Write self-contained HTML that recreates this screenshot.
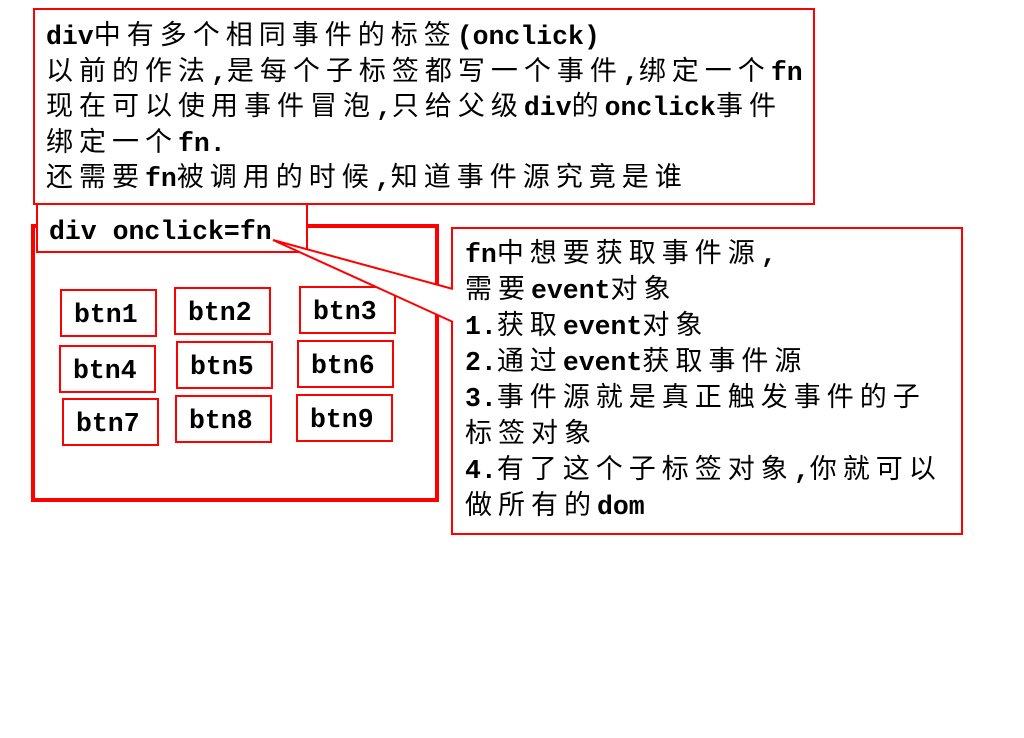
<!DOCTYPE html>
<html><head><meta charset="utf-8"><style>
body{margin:0;width:1024px;height:738px;background:#fff;position:relative;overflow:hidden;font-family:"Liberation Mono","Noto Sans CJK SC",monospace;font-size:26.5px;color:#000}
.b{position:absolute;box-sizing:border-box;border:2px solid #f00;background:#fff}
.t{position:absolute;white-space:nowrap;font-weight:bold}
.t div{height:35.5px;line-height:35.5px}
.r div{height:36px;line-height:36px}
i{font-style:normal;font-weight:normal;letter-spacing:6px;font-size:27px;line-height:1;font-family:"Noto Sans CJK SC",sans-serif}
.btn{position:absolute;box-sizing:border-box;border:2px solid #f00;width:97px;height:48px;font-weight:bold;line-height:48px;padding-left:12px}
</style></head><body>
<div class="b" style="left:31px;top:224px;width:408px;height:278px;border-width:4px"></div>
<div class="b" style="left:33px;top:8px;width:782px;height:197px"></div>
<div class="t" style="left:46px;top:19px">
<div>div<i>中有多个相同事件的标签</i>(onclick)</div>
<div><i>以前的作法</i>,<i>是每个子标签都写一个事件</i>,<i>绑定一个</i>fn</div>
<div><i>现在可以使用事件冒泡</i>,<i>只给父级</i>div<i>的</i>onclick<i>事件</i></div>
<div><i>绑定一个</i>fn.</div>
<div><i>还需要</i>fn<i>被调用的时候</i>,<i>知道事件源究竟是谁</i></div>
</div>
<div class="b" style="left:36px;top:203px;width:272px;height:50px"></div>
<div class="t" style="left:49px;top:214px;line-height:36px">div onclick=fn</div>
<div class="btn" style="left:60px;top:289px">btn1</div>
<div class="btn" style="left:174px;top:287px">btn2</div>
<div class="btn" style="left:299px;top:286px">btn3</div>
<div class="btn" style="left:59px;top:345px">btn4</div>
<div class="btn" style="left:176px;top:341px">btn5</div>
<div class="btn" style="left:297px;top:340px">btn6</div>
<div class="btn" style="left:62px;top:398px">btn7</div>
<div class="btn" style="left:175px;top:395px">btn8</div>
<div class="btn" style="left:296px;top:394px">btn9</div>
<div class="b" style="left:451px;top:227px;width:512px;height:308px"></div>
<svg style="position:absolute;left:0;top:0" width="1024" height="738">
<polygon points="273,240 453,289 453,322" fill="#fff" stroke="none"/>
<polyline points="453,289 273,240 453,322" fill="none" stroke="#f00" stroke-width="2"/>
</svg>
<div class="t r" style="left:465px;top:237px">
<div>fn<i>中想要获取事件源</i>,</div>
<div><i>需要</i>event<i>对象</i></div>
<div>1.<i>获取</i>event<i>对象</i></div>
<div>2.<i>通过</i>event<i>获取事件源</i></div>
<div>3.<i>事件源就是真正触发事件的子</i></div>
<div><i>标签对象</i></div>
<div>4.<i>有了这个子标签对象</i>,<i>你就可以</i></div>
<div><i>做所有的</i>dom</div>
</div>
</body></html>
